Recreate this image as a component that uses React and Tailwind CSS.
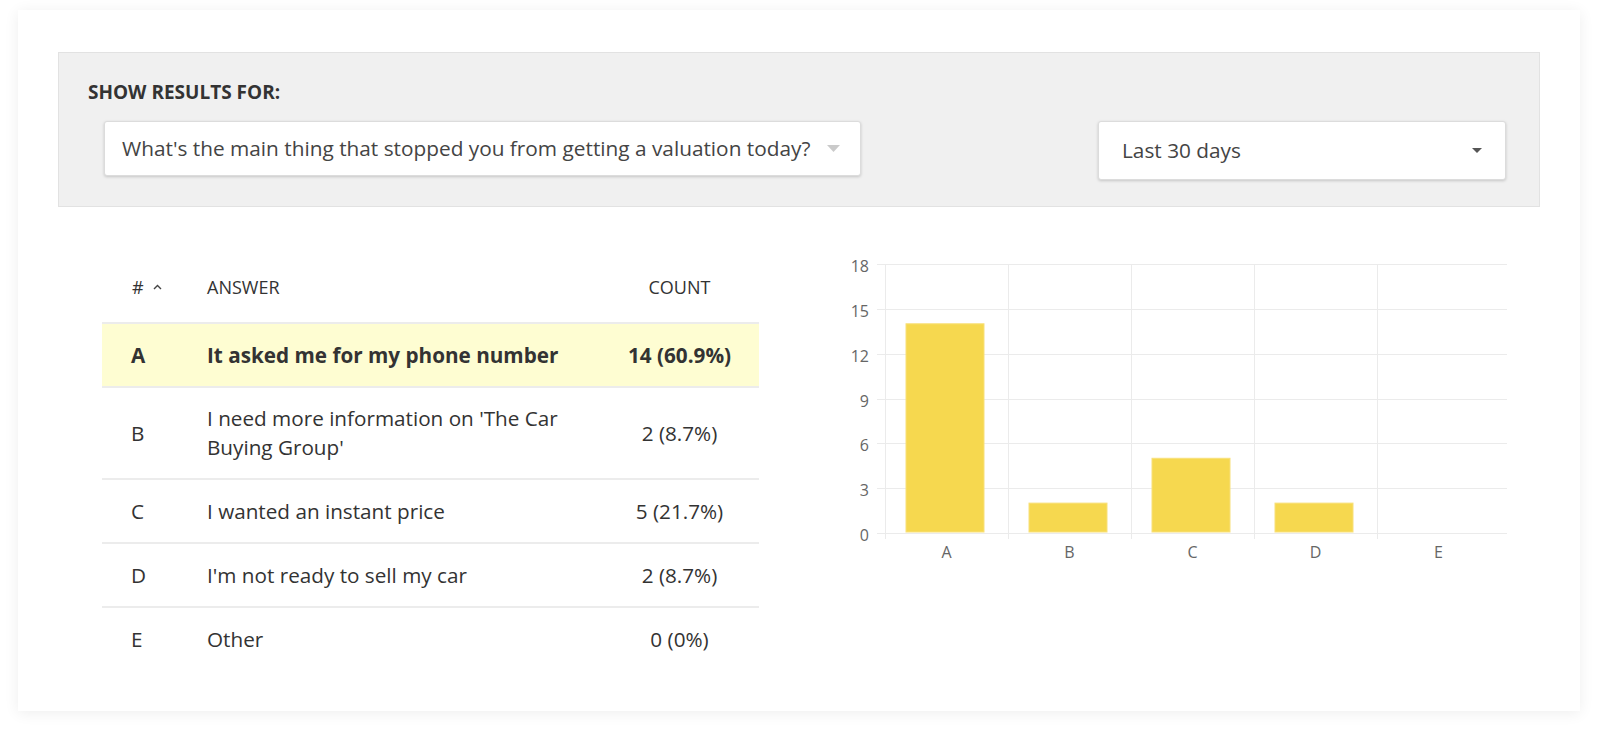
import React from 'react';

const rows = [
  { id: 'A', answer: 'It asked me for my phone number', count: '14 (60.9%)', top: true },
  { id: 'B', answer: "I need more information on 'The Car Buying Group'", count: '2 (8.7%)', tall: true },
  { id: 'C', answer: 'I wanted an instant price', count: '5 (21.7%)' },
  { id: 'D', answer: "I'm not ready to sell my car", count: '2 (8.7%)' },
  { id: 'E', answer: 'Other', count: '0 (0%)' },
];

const bars = [['A', 14], ['B', 2], ['C', 5], ['D', 2], ['E', 0]];

function Arrow({ w, h, color }) {
  return (
    <svg width={w} height={h} viewBox={`0 0 ${w} ${h}`} className="shrink-0">
      <path d={`M0 0 L${w} 0 L${w / 2} ${h} Z`} fill={color} />
    </svg>
  );
}

function Chart() {
  const y0 = 283;
  const unit = 269 / 18;
  const px = (v) => Math.round(y0 - v * unit) + 0.5;
  return (
    <svg width="700" height="320" className="shrink-0">
      {[0, 3, 6, 9, 12, 15, 18].map((v) => (
        <g key={v}>
          <line x1="47" x2="677" y1={px(v)} y2={px(v)} stroke="#ebebeb" />
          <text x="39" y={px(v) + 1} textAnchor="end" dominantBaseline="central" fontSize="16" fill="#666">{v}</text>
        </g>
      ))}
      {[0, 1, 2, 3, 4].map((i) => (
        <line key={i} x1={55.5 + i * 123} x2={55.5 + i * 123} y1="14" y2="289" stroke="#ebebeb" />
      ))}
      {bars.map(([k, v], i) => (
        v > 0 ? <rect key={k} x={76 + i * 123} y={y0 - v * unit} width="78" height={v * unit - 1} fill="#f6d84f" stroke="#f8e07a" strokeWidth="1" /> : null
      ))}
      {bars.map(([k], i) => (
        <text key={k} x={116.5 + i * 123} y="302" textAnchor="middle" dominantBaseline="central" fontSize="16" fill="#666">{k}</text>
      ))}
    </svg>
  );
}

export default function App() {
  return (
    <div className="min-h-screen bg-white px-[18px] pt-[10px] font-['Open_Sans','Liberation_Sans',sans-serif] text-[#333]">
      <div className="h-[701px] bg-white px-[40px] pt-[42px] shadow-[0_2px_14px_rgba(0,0,0,0.07)]">
        <div className="h-[155px] border border-[#e2e2e2] bg-[#f0f0f0] pl-[29px] pr-[33px] pt-[27px]">
          <div className="text-[19px] font-bold leading-[24px] text-[#333]">SHOW RESULTS FOR:</div>
          <div className="mt-[17px] flex items-start justify-between pl-[16px]">
            <div className="flex h-[55px] w-[757px] items-center justify-between rounded-[3px] border border-[#dcdcdc] bg-white pl-[17px] pr-[20px] shadow-[0_1px_3px_rgba(0,0,0,0.18)]">
              <span className="text-[20.8px] text-[#444]">What's the main thing that stopped you from getting a valuation today?</span>
              <Arrow w={13} h={7} color="#cacaca" />
            </div>
            <div className="flex h-[59px] w-[408px] items-center justify-between rounded-[3px] border border-[#dcdcdc] bg-white pl-[23px] pr-[23px] shadow-[0_1px_3px_rgba(0,0,0,0.18)]">
              <span className="text-[20.8px] text-[#444]">Last 30 days</span>
              <Arrow w={10} h={5} color="#555" />
            </div>
          </div>
        </div>

        <div className="flex pl-[44px]">
          <div className="mt-[45px] w-[657px] shrink-0">
            <div className="flex h-[70px] items-center text-[18px] uppercase text-[#333]">
              <div className="flex w-[105px] items-center gap-[9px] pl-[30px]">
                <span>#</span>
                <svg width="9" height="6" viewBox="0 0 9 6"><path d="M1 5 L4.5 1.5 L8 5" fill="none" stroke="#444" strokeWidth="1.4" /></svg>
              </div>
              <div className="w-[393px]">Answer</div>
              <div className="w-[159px] text-center">Count</div>
            </div>
            {rows.map((r) => (
              <div
                key={r.id}
                className={`flex items-center border-t-2 border-[#ececec] text-[20.7px] leading-[29px] ${r.tall ? 'h-[92px]' : 'h-[64px]'} ${r.top ? 'bg-[#fefdd2] font-bold' : ''}`}
              >
                <div className="w-[105px] pl-[29px]">{r.id}</div>
                <div className="w-[393px] pr-[20px]">{r.answer}</div>
                <div className="w-[159px] text-center">{r.count}</div>
              </div>
            ))}
          </div>
          <div className="ml-[71px] mt-[43px]">
            <Chart />
          </div>
        </div>
      </div>
    </div>
  );
}
